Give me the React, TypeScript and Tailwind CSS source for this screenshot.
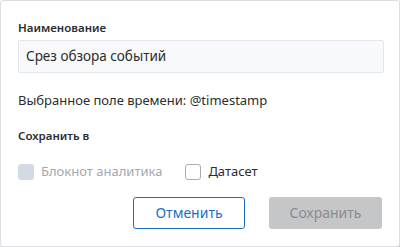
import React from "react";

const SaveSliceDialog = () => {
  return (
    <div className="w-[400px] h-[247px] bg-white border border-[#dcdee2] rounded-[3px] shadow-[1px_1px_2px_rgba(0,0,0,0.25)] px-[17px] pt-[19px] font-['Noto_Sans',sans-serif] text-[#2b2d30]">
      <div className="text-[11.5px] font-semibold leading-[16px]">Наименование</div>
      <div className="mt-[4px] h-[33px] w-[366px] bg-[#f8f9fa] border border-[#e4e7ec] rounded-[2px] flex items-center px-[7px] text-[13.5px]">
        Срез обзора событий
      </div>
      <div className="mt-[18px] text-[13px] leading-[18px]">Выбранное поле времени: @timestamp</div>
      <div className="mt-[18px] text-[11.5px] font-semibold leading-[18px]">Сохранить в</div>
      <div className="mt-[17px] flex items-center text-[13px]">
        <label className="flex items-center gap-[7px] text-[#a3a8b0]">
          <span className="w-[16px] h-[16px] rounded-[3px] bg-[#d4dae4] inline-block" />
          Блокнот аналитика
        </label>
        <label className="ml-[23px] flex items-center gap-[7px] text-[#2b2d30]">
          <span className="w-[16px] h-[16px] rounded-[3px] border border-[#a9adb3] bg-white inline-block" />
          Датасет
        </label>
      </div>
      <div className="mt-[15px] flex justify-end gap-[24px]">
        <button className="w-[112px] h-[32px] rounded-[3px] border border-[#1a6fc4] text-[#1a6fc4] text-[14px] bg-white">
          Отменить
        </button>
        <button className="w-[113px] h-[32px] rounded-[3px] bg-[#c5c6c8] text-[#8b8c8f] text-[14px]" disabled>
          Сохранить
        </button>
      </div>
    </div>
  );
};

export default function App() {
  return <SaveSliceDialog />;
}
